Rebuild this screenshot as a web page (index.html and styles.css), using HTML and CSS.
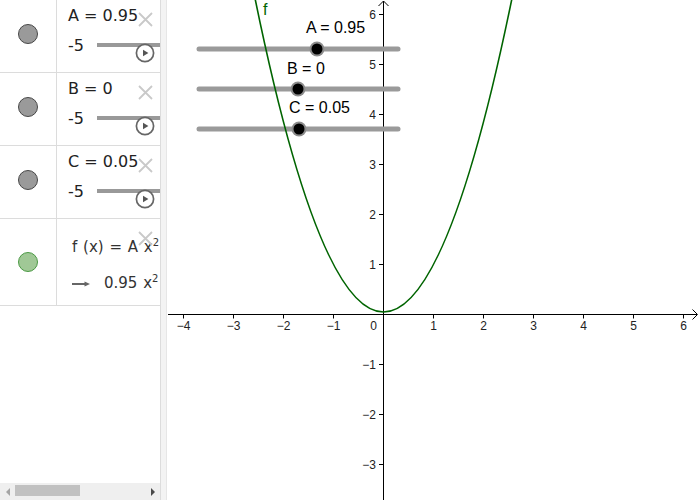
FILE: index.html
```html
<!DOCTYPE html>
<html>
<head>
<meta charset="utf-8">
<link rel="stylesheet" href="styles.css">
</head>
<body>
<div class="app">
  <div class="algebra">
    <div class="rows">
      <div class="row slider-row">
        <div class="marker"><span class="dot"></span></div>
        <div class="content">
          <div class="def">A = 0.95</div>
          <div class="range"><span class="min">-5</span><span class="track"></span></div>
        </div>
        <svg class="close" viewBox="0 0 15 15"><path d="M1 1L14 14M14 1L1 14"/></svg>
        <svg class="play" viewBox="0 0 20 20"><circle cx="10" cy="10" r="8.6"/><path d="M8 6.8L13.4 10L8 13.2Z"/></svg>
      </div>
      <div class="row slider-row">
        <div class="marker"><span class="dot"></span></div>
        <div class="content">
          <div class="def">B = 0</div>
          <div class="range"><span class="min">-5</span><span class="track"></span></div>
        </div>
        <svg class="close" viewBox="0 0 15 15"><path d="M1 1L14 14M14 1L1 14"/></svg>
        <svg class="play" viewBox="0 0 20 20"><circle cx="10" cy="10" r="8.6"/><path d="M8 6.8L13.4 10L8 13.2Z"/></svg>
      </div>
      <div class="row slider-row">
        <div class="marker"><span class="dot"></span></div>
        <div class="content">
          <div class="def">C = 0.05</div>
          <div class="range"><span class="min">-5</span><span class="track"></span></div>
        </div>
        <svg class="close" viewBox="0 0 15 15"><path d="M1 1L14 14M14 1L1 14"/></svg>
        <svg class="play" viewBox="0 0 20 20"><circle cx="10" cy="10" r="8.6"/><path d="M8 6.8L13.4 10L8 13.2Z"/></svg>
      </div>
      <div class="row func-row">
        <div class="marker"><span class="dot green"></span></div>
        <div class="content func">
          <div class="fdef">f (x) = A x<span class="sup">2</span> + B x + C</div>
          <div class="fval"><svg class="arrow" viewBox="0 0 18 8"><path class="shaft" d="M0 4H14"/><path class="head" d="M12.5 1.5L18 4L12.5 6.5Z"/></svg><span>0.95 x<span class="sup">2</span> + 0.05</span></div>
        </div>
        <svg class="close" viewBox="0 0 15 15"><path d="M1 1L14 14M14 1L1 14"/></svg>
      </div>
    </div>
    <div class="hscroll">
      <div class="sb-btn"><span class="arr-left"></span></div>
      <div class="sb-track"><div class="thumb"></div></div>
      <div class="sb-btn"><span class="arr-right"></span></div>
    </div>
  </div>
  <div class="splitter"></div>
  <svg class="graphics" viewBox="167 0 533 500" width="533" height="500">
    <g class="axes">
      <line x1="168" y1="314.5" x2="697" y2="314.5"/>
      <polyline points="692.5,309.5 697.5,314.5 692.5,319.5"/>
      <line x1="383.5" y1="1" x2="383.5" y2="500"/>
      <polyline points="378.5,6 383.5,1 388.5,6"/>
      <path d="M183.5 315V318.5M233.5 315V318.5M283.5 315V318.5M333.5 315V318.5M433.5 315V318.5M483.5 315V318.5M533.5 315V318.5M583.5 315V318.5M633.5 315V318.5M683.5 315V318.5"/>
      <path d="M379 14.5H383M379 64.5H383M379 114.5H383M379 164.5H383M379 214.5H383M379 264.5H383M379 364.5H383M379 414.5H383M379 464.5H383"/>
    </g>
    <g class="xlabels">
      <text x="183.5" y="330">−4</text>
      <text x="233.5" y="330">−3</text>
      <text x="283.5" y="330">−2</text>
      <text x="333.5" y="330">−1</text>
      <text x="433.5" y="330">1</text>
      <text x="483.5" y="330">2</text>
      <text x="533.5" y="330">3</text>
      <text x="583.5" y="330">4</text>
      <text x="633.5" y="330">5</text>
      <text x="683.5" y="330">6</text>
    </g>
    <g class="ylabels">
      <text x="377" y="330">0</text>
      <text x="376" y="18.5">6</text>
      <text x="376" y="68.5">5</text>
      <text x="376" y="118.5">4</text>
      <text x="376" y="168.5">3</text>
      <text x="376" y="218.5">2</text>
      <text x="376" y="268.5">1</text>
      <text x="376" y="368.5">−1</text>
      <text x="376" y="418.5">−2</text>
      <text x="376" y="468.5">−3</text>
    </g>
    <g class="slider-lines">
      <line x1="199" y1="49" x2="398" y2="49"/>
      <line x1="199" y1="89" x2="398" y2="89"/>
      <line x1="199" y1="129" x2="398" y2="129"/>
    </g>
    <path class="curve" d="M253.5,-9.1 Q383.5,633.1 513.5,-9.1"/>
    <text class="flabel" x="263" y="15">f</text>
    <g class="knobs">
      <circle class="halo" cx="317" cy="49" r="7.5"/><circle class="core" cx="317" cy="49" r="5.5"/>
      <circle class="halo" cx="298" cy="89" r="7.5"/><circle class="core" cx="298" cy="89" r="5.5"/>
      <circle class="halo" cx="299" cy="129" r="7.5"/><circle class="core" cx="299" cy="129" r="5.5"/>
    </g>
    <g class="slabels">
      <text x="306" y="33">A = 0.95</text>
      <text x="287" y="74">B = 0</text>
      <text x="289" y="113">C = 0.05</text>
    </g>
  </svg>
</div>
</body>
</html>
```

FILE: styles.css
```css
html, body {
  margin: 0;
  padding: 0;
}
body {
  width: 700px;
  height: 500px;
  overflow: hidden;
  background: #fff;
  font-family: "DejaVu Sans", sans-serif;
}
.app {
  display: flex;
  width: 700px;
  height: 500px;
}
.algebra {
  width: 160px;
  flex: none;
  display: flex;
  flex-direction: column;
  overflow: hidden;
  background: #fff;
}
.rows {
  flex: 1;
}
.row {
  position: relative;
  display: flex;
  height: 72px;
  border-bottom: 1px solid #dcdcdc;
}
.row.func-row {
  height: 86px;
}
.marker {
  width: 56px;
  flex: none;
  border-right: 1px solid #dcdcdc;
  display: flex;
  align-items: center;
  justify-content: center;
}
.slider-row .marker {
  padding-bottom: 4px;
}
.dot {
  width: 18px;
  height: 18px;
  border-radius: 50%;
  background: #9a9a9a;
  border: 1px solid #474747;
}
.dot.green {
  background: #a0c896;
  border-color: #4b9a45;
}
.content {
  flex: 1;
  min-width: 0;
  overflow: hidden;
  padding-left: 11px;
  color: #222;
  white-space: nowrap;
}
.content.func {
  padding-left: 15px;
}
.def {
  font-size: 16px;
  line-height: 20px;
  padding-top: 6px;
}
.range {
  display: flex;
  align-items: flex-start;
  margin-top: 10px;
  font-size: 16px;
  line-height: 20px;
}
.track {
  flex: none;
  width: 120px;
  height: 4px;
  margin-top: 7px;
  margin-left: 13px;
  background: #999;
}
.close {
  position: absolute;
  left: 138px;
  top: 12px;
  width: 15px;
  height: 15px;
}
.close path {
  stroke: #c9c9c9;
  stroke-width: 1.8;
  fill: none;
}
.play {
  position: absolute;
  left: 135px;
  top: 43px;
  width: 20px;
  height: 20px;
}
.play circle {
  fill: #fff;
  stroke: #666;
  stroke-width: 1.7;
}
.play path {
  fill: #555;
}
.fdef {
  font-size: 15px;
  line-height: 20px;
  padding-top: 18px;
  color: #333;
  word-spacing: 1px;
}
.fval {
  display: flex;
  align-items: center;
  margin-top: 16px;
  font-size: 15px;
  line-height: 20px;
  color: #333;
  word-spacing: 1px;
}
.sup {
  font-size: 10px;
  line-height: 0;
  vertical-align: 6px;
}
.arrow {
  width: 18px;
  height: 8px;
  flex: none;
  margin-right: 14px;
  margin-top: 2px;
}
.arrow .shaft {
  stroke: #666;
  stroke-width: 2;
}
.arrow .head {
  fill: #666;
}
.hscroll {
  height: 17px;
  flex: none;
  display: flex;
  background: #efefef;
}
.sb-btn {
  width: 15px;
  flex: none;
  display: flex;
  align-items: center;
  justify-content: center;
}
.arr-left {
  width: 0;
  height: 0;
  border-top: 4px solid transparent;
  border-bottom: 4px solid transparent;
  border-right: 4px solid #a5a5a5;
}
.arr-right {
  width: 0;
  height: 0;
  border-top: 4px solid transparent;
  border-bottom: 4px solid transparent;
  border-left: 4px solid #4a4a4a;
}
.sb-track {
  flex: 1;
}
.thumb {
  width: 65px;
  height: 11px;
  margin-top: 2px;
  background: #c1c1c1;
}
.splitter {
  width: 5px;
  flex: none;
  background: #f3f3f3;
  border-left: 1px solid #dcdcdc;
  border-right: 1px solid #e6e6e6;
}
.graphics {
  display: block;
  flex: none;
  width: 533px;
  height: 500px;
}
.axes line,
.axes polyline,
.axes path {
  stroke: #000;
  stroke-width: 1;
  fill: none;
}
.xlabels text,
.ylabels text {
  font-family: "Liberation Sans", Arial, sans-serif;
  font-size: 12px;
  fill: #222;
}
.xlabels text {
  text-anchor: middle;
}
.ylabels text {
  text-anchor: end;
}
.slider-lines line {
  stroke: #9a9a9a;
  stroke-width: 5;
  stroke-linecap: round;
}
.curve {
  fill: none;
  stroke: #006400;
  stroke-width: 1.6;
}
.flabel {
  font-family: "Liberation Sans", Arial, sans-serif;
  font-size: 16px;
  fill: #006400;
}
.halo {
  fill: #8c8c8c;
}
.core {
  fill: #000;
}
.slabels text {
  font-family: "Liberation Sans", Arial, sans-serif;
  font-size: 16px;
  fill: #000;
}
```
